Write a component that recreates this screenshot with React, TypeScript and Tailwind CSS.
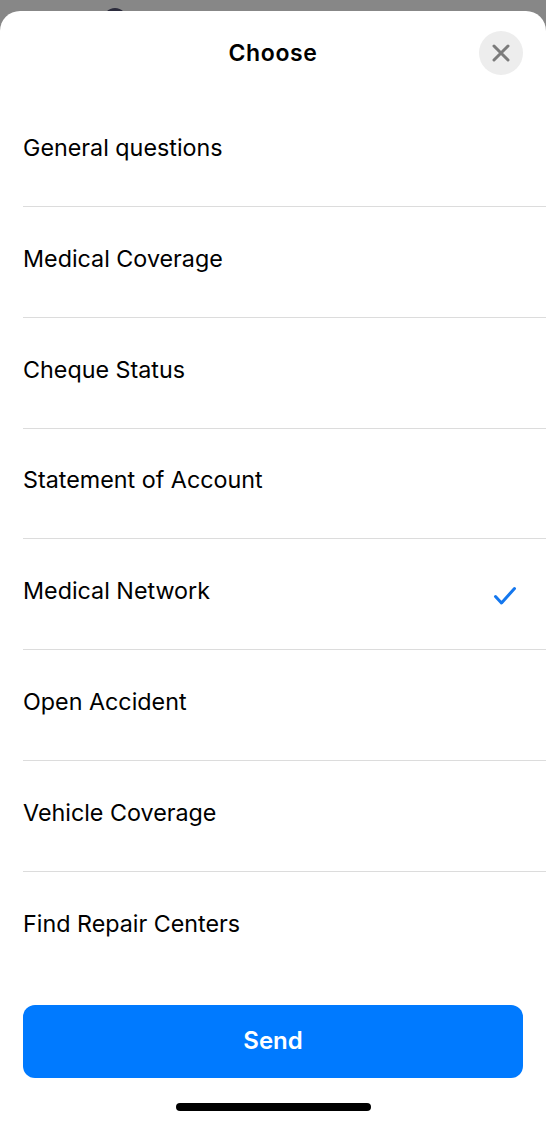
import React from "react";

const items = [
  "General questions",
  "Medical Coverage",
  "Cheque Status",
  "Statement of Account",
  "Medical Network",
  "Open Accident",
  "Vehicle Coverage",
  "Find Repair Centers",
];

export default function App() {
  return (
    <div
      className="relative w-[546px] h-[1123px] overflow-hidden bg-[#878787]"
      style={{ fontFamily: "Inter, 'Noto Sans', sans-serif" }}
    >
      <div className="absolute left-[103px] top-[8px] w-[24px] h-[24px] rounded-full bg-[#2b2b3c]" />
      <div className="relative mt-[11px] h-[1112px] bg-white rounded-t-[20px] flex flex-col">
        <div className="relative h-[85px] flex items-center justify-center pb-[1px]">
          <span className="text-[23px] font-semibold text-black tracking-[0.6px]">Choose</span>
          <button className="absolute right-[23px] top-[20px] w-[44px] h-[44px] rounded-full bg-[#ededed] flex items-center justify-center">
            <svg width="18" height="18" viewBox="0 0 18 18">
              <path d="M2 2 L16 16 M16 2 L2 16" stroke="#7b7b7b" strokeWidth="3" strokeLinecap="round" />
            </svg>
          </button>
        </div>
        <div className="flex flex-col">
          {items.map((t, i) => (
            <div key={t} className="pl-[23px] h-[110.85px]">
              <div
                className={`h-full flex items-center justify-between pr-[29px] pb-[5px] ${
                  i < items.length - 1 ? "border-b border-[#dcdcdc]" : ""
                }`}
              >
                <span className="text-[23.3px] text-black">{t}</span>
                {t === "Medical Network" && (
                  <svg width="24" height="20" viewBox="0 0 24 20" className="mt-[9px]">
                    <path d="M2.5 10.5 L8.5 17 L21.5 2.5" fill="none" stroke="#1477ee" strokeWidth="3" strokeLinecap="round" strokeLinejoin="round" />
                  </svg>
                )}
              </div>
            </div>
          ))}
        </div>
        <div className="px-[23px] mt-[22px]">
          <button className="w-full h-[73px] rounded-[12px] bg-[#007aff] text-white text-[24px] font-semibold flex items-center justify-center">
            Send
          </button>
        </div>
        <div className="mt-[25px] flex justify-center">
          <div className="w-[195px] h-[8px] rounded-full bg-black" />
        </div>
      </div>
    </div>
  );
}
